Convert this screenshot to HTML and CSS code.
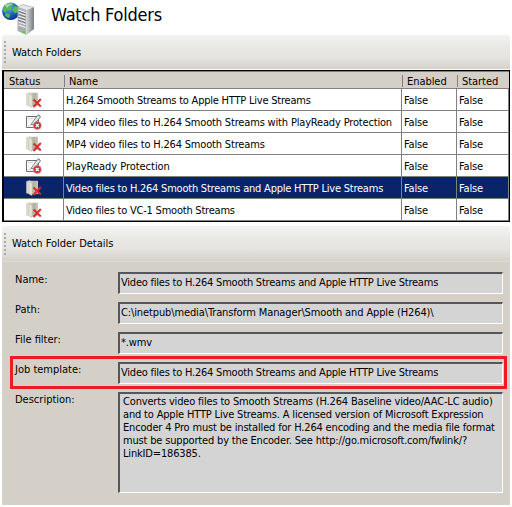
FILE: index.html
```html
<!DOCTYPE html>
<html lang="en">
<head>
<meta charset="utf-8">
<title>Watch Folders</title>
<link rel="stylesheet" href="styles.css">
</head>
<body>
<svg width="0" height="0" class="defs" aria-hidden="true">
  <defs>
    <linearGradient id="fold" x1="0" x2="1"><stop offset="0" stop-color="#d9d6ca"/><stop offset=".5" stop-color="#b3af9f"/><stop offset="1" stop-color="#cbc8ba"/></linearGradient>
    <linearGradient id="side" x1="0" x2="1"><stop offset="0" stop-color="#d0d3d6"/><stop offset="1" stop-color="#777b80"/></linearGradient>
    <radialGradient id="globe" cx=".4" cy=".3" r=".75"><stop offset="0" stop-color="#66b5f2"/><stop offset=".5" stop-color="#1e66cc"/><stop offset="1" stop-color="#092d86"/></radialGradient>
    <symbol id="folder" viewBox="0 0 16 16">
      <path d="M.5 1.5 4 .5 4 14 .5 13Z" fill="#dedbd0" stroke="#c9c6ba" stroke-width=".5"/>
      <path d="M4 .8 12 .8 12 14 4 14.5Z" fill="url(#fold)"/>
      <path d="M3 1.5 6 3.5 6 15.5 3 14Z" fill="#e9e6dd" stroke="#b4b1a3" stroke-width=".5"/>
      <path d="M7.5 7.5 14.8 14.5M14.8 7 7.5 15" stroke="#d92c2c" stroke-width="2"/>
    </symbol>
    <symbol id="edit" viewBox="0 0 16 16">
      <path d="M.5 2.5H12.5V13.5H.5Z" fill="#f6f6f6" stroke="#6b7075"/>
      <path d="M2 4.5H7M2 11.5H5" stroke="#d5d8db"/>
      <path d="M5 10.5 11 2 13 .8 14.5 3 8 10.5Z" fill="#d8d8d4" stroke="#65686a" stroke-width=".8"/>
      <path d="M6.5 9.5 12.5 2.5" stroke="#fff" stroke-width=".8"/>
      <circle cx="11.3" cy="11.5" r="4" fill="#c93038" stroke="#dda0a2" stroke-width=".6"/>
      <path d="M9.8 10 12.8 13M12.8 10 9.8 13" stroke="#fff" stroke-width="1.2"/>
    </symbol>
  </defs>
</svg>
<main class="page">
  <header class="title-bar">
    <svg class="app-icon" viewBox="0 0 34 34" width="34" height="34">
      <circle cx="8.8" cy="10.3" r="8.7" fill="url(#globe)"/>
      <path d="M2 5Q5 1.8 10 2L12 3.5 9.5 5 8.5 8 5.5 8.5 4 11.5 1.5 11 1 8.5ZM11 6.5 14 4.5 16 8 16.2 11 13 12.5 10.5 9.5ZM3.5 12 8 13 7.5 17 5 16.5 3 14.5Z" fill="#58b848"/>
      <path d="M3 4Q7 1.5 11 3Q7 4 5 7Z" fill="#d6f0e8" opacity=".6"/>
      <path d="M15 6 21 3.5 32 6.5 24.5 9.5Z" fill="#e4e6e8" stroke="#8a8e92" stroke-width=".5"/>
      <path d="M15.5 6 24.5 9.5 24.5 34 15.5 30Z" fill="#a9adb1"/>
      <path d="M24.5 9.5 32 6.5 32 28 24.5 34Z" fill="url(#side)"/>
      <path d="M16.5 9 23.5 11.5M16.5 12 23.5 14.5M16.5 15 23.5 17.5M16.5 18 23.5 20.5M16.5 21 23.5 23.5M16.5 24 23.5 26.5" stroke="#f2f4f5" stroke-width="1.2"/>
      <path d="M16.5 10.3 23.5 12.8M16.5 13.3 23.5 15.8M16.5 16.3 23.5 18.8M16.5 19.3 23.5 21.8" stroke="#5f6469" stroke-width=".8"/>
      <circle cx="21.7" cy="31.2" r="1.4" fill="#67d52c"/>
    </svg>
    <h1>Watch Folders</h1>
  </header>

  <div class="toolbar"><i class="grip"></i><span>Watch Folders</span></div>

  <section class="grid">
    <div class="row head"><span>Status</span><span>Name</span><span>Enabled</span><span>Started</span></div>
    <div class="row"><span><svg class="ico"><use href="#folder"/></svg></span><span class="tight">H.264 Smooth Streams to Apple HTTP Live Streams</span><span>False</span><span>False</span></div>
    <div class="row"><span><svg class="ico"><use href="#edit"/></svg></span><span>MP4 video files to H.264 Smooth Streams with PlayReady Protection</span><span>False</span><span>False</span></div>
    <div class="row"><span><svg class="ico"><use href="#folder"/></svg></span><span>MP4 video files to H.264 Smooth Streams</span><span>False</span><span>False</span></div>
    <div class="row"><span><svg class="ico"><use href="#edit"/></svg></span><span class="loose">PlayReady Protection</span><span>False</span><span>False</span></div>
    <div class="row selected"><span><svg class="ico"><use href="#folder"/></svg></span><span class="tight">Video files to H.264 Smooth Streams and Apple HTTP Live Streams</span><span>False</span><span>False</span></div>
    <div class="row"><span><svg class="ico"><use href="#folder"/></svg></span><span class="tight">Video files to VC-1 Smooth Streams</span><span>False</span><span>False</span></div>
  </section>

  <div class="toolbar details-bar"><i class="grip"></i><span>Watch Folder Details</span></div>

  <section class="details">
    <div class="field"><label>Name:</label><div class="box tight">Video files to H.264 Smooth Streams and Apple HTTP Live Streams</div></div>
    <div class="field"><label>Path:</label><div class="box path">C:\inetpub\media\Transform Manager\Smooth and Apple (H264)\</div></div>
    <div class="field"><label>File filter:</label><div class="box">*.wmv</div></div>
    <div class="field marked"><label>Job template:</label><div class="box tight">Video files to H.264 Smooth Streams and Apple HTTP Live Streams</div></div>
    <div class="field"><label>Description:</label><div class="box area">Converts video files to Smooth Streams (H.264 Baseline video/AAC-LC audio)<br>and to Apple HTTP Live Streams. A licensed version of Microsoft Expression<br>Encoder 4 Pro must be installed for H.264 encoding and the media file format<br>must be supported by the Encoder. See http://go.microsoft.com/fwlink/?<br>LinkID=186385.</div></div>
  </section>
</main>
</body>
</html>
```
FILE: styles.css
```css
* { box-sizing: border-box; }
body {
  margin: 0;
  background: #fff;
  color: #000;
  font: 11px/13px "DejaVu Sans Condensed", "DejaVu Sans", sans-serif;
  font-stretch: condensed;
  letter-spacing: -0.17px;
  white-space: nowrap;
}
.defs { display: block; height: 0; }
.page { width: 512px; height: 507px; padding-left: 2px; overflow: hidden; }

.title-bar { display: flex; height: 35px; }
.app-icon { flex: none; margin-top: 1px; }
h1 { margin: 4px 0 0 15px; font-size: 18px; line-height: 22px; font-weight: 400; letter-spacing: -0.22px; }

.toolbar {
  display: flex;
  align-items: center;
  width: 508px;
  height: 34px;
  background: linear-gradient(#f3f3f1, #e8e7e3 40%, #e5e4df 65%, #d5d2ca);
  border-radius: 3px 3px 0 0;
  letter-spacing: -0.03px;
}
.grip {
  width: 2px;
  height: 22px;
  margin: 0 6px 0 2px;
  background: repeating-linear-gradient(#a9a9a9 0 2px, transparent 2px 4px);
}

.grid {
  width: 508px;
  height: 152px;
  margin-top: 1px;
  border: solid #000;
  border-width: 1px 1px 1px 2px;
}
.row {
  display: grid;
  grid-template-columns: 60px 338px 55px 52px;
  height: 22px;
  border-bottom: 1px solid #808080;
}
.row > span { display: flex; align-items: center; padding: 1px 0 0 2px; border-right: 1px solid #808080; }
.row > span:first-child { justify-content: center; padding: 0; }
.row.head { height: 18px; background: #d4d0c8; border-top: 1px solid #808080; }
.row.head > span { padding: 2px 0 0 5px; border-right: 0; letter-spacing: -0.05px; }
.row.head > span:first-child { justify-content: flex-start; }
.row.head > span + span { background: linear-gradient(#808080, #808080) 0 3px / 1px 12px no-repeat; }
.ico { width: 16px; height: 16px; }
.row.selected > span { background: #0a246a; color: #fff; }
.row.selected > span:last-child { border-right-color: #808080; }
.tight { letter-spacing: -0.22px; }
.loose { letter-spacing: -0.03px; }
.path { letter-spacing: -0.12px; }

.details-bar { margin-top: 4px; height: 36px; border-bottom: 1px solid #dfddd7; }
.details {
  display: flex;
  flex-direction: column;
  width: 508px;
  height: 243px;
  padding: 5px 3px 0 8px;
  background: #d4d0c8;
}
.field { display: flex; height: 30px; padding: 5px 5px 0 5px; }
.field label { flex: none; width: 103px; padding-top: 1px; letter-spacing: 0; }
.box {
  flex: none;
  width: 385px;
  height: 22px;
  padding: 2px 0 0 1px;
  background: #d4d4d4;
  border: solid;
  border-width: 2px 1px 1px 2px;
  border-color: #55565a #fff #fff #55565a;
}
.area { height: 101px; padding: 1px 0 0 3px; }
.marked { height: 33px; margin-top: -1px; margin-bottom: -2px; padding: 3px 2px 0; border: 3px solid #ed1c24; }
```
